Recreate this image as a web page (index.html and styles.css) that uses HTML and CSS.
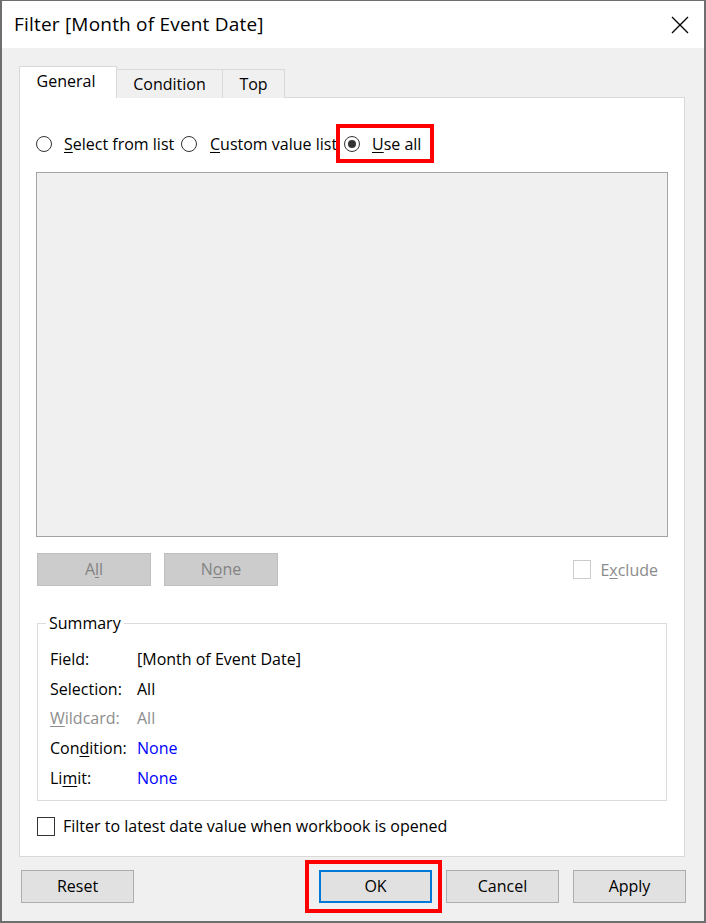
FILE: index.html
```html
<!DOCTYPE html>
<html>
<head>
<meta charset="utf-8">
<link rel="stylesheet" href="styles.css">
</head>
<body>
<div class="window">
  <div class="titlebar">
    <span class="title">Filter [Month of Event Date]</span>
    <svg class="close" width="18" height="18" viewBox="0 0 18 18"><path d="M1 1 L17 17 M17 1 L1 17" stroke="#000" stroke-width="1.3" fill="none"/></svg>
  </div>
  <div class="content">
    <div class="tabs">
      <div class="tab active">General</div>
      <div class="tab">Condition</div>
      <div class="tab">Top</div>
    </div>
    <div class="panel">
      <div class="radios">
        <label class="radio r1"><span class="circle"></span><span><u>S</u>elect from list</span></label>
        <label class="radio r2"><span class="circle"></span><span><u>C</u>ustom value list</span></label>
        <label class="radio r3 highlight"><span class="circle checked"></span><span><u>U</u>se all</span></label>
      </div>
      <div class="listbox"></div>
      <div class="listactions">
        <div class="btn disabled">A<u>l</u>l</div>
        <div class="btn disabled">N<u>o</u>ne</div>
        <div class="spacer"></div>
        <label class="check disabled"><span class="box"></span><span>E<u>x</u>clude</span></label>
      </div>
      <fieldset class="summary">
        <legend>Summary</legend>
        <div class="grid">
          <span>Field:</span><span>[Month of Event Date]</span>
          <span>Selection:</span><span>All</span>
          <span class="muted"><u>W</u>ildcard:</span><span class="muted">All</span>
          <span>Con<u>d</u>ition:</span><span class="link">None</span>
          <span>Li<u>m</u>it:</span><span class="link">None</span>
        </div>
      </fieldset>
      <label class="check latest"><span class="box dark"></span><span>Filter to latest date value when workbook is opened</span></label>
    </div>
    <div class="footer">
      <div class="btn">Reset</div>
      <div class="spacer"></div>
      <div class="btn default highlight">OK</div>
      <div class="btn">Cancel</div>
      <div class="btn">Apply</div>
    </div>
  </div>
</div>
</body>
</html>
```
FILE: styles.css
```css
*, *::before, *::after { box-sizing: border-box; }
html, body { margin: 0; padding: 0; background: #fff; }
body {
  font-family: "Open Sans", "Noto Sans", "Liberation Sans", sans-serif;
  font-size: 16px;
  color: #000;
}
u { text-decoration: underline; text-underline-offset: 2px; text-decoration-thickness: 1px; }
.window {
  width: 706px;
  height: 923px;
  border: 1px solid #6e6e6e;
  border-width: 1px 2px 2px 2px;
  display: flex;
  flex-direction: column;
  background: #f0f0f0;
}
.titlebar {
  height: 47px;
  background: #fff;
  display: flex;
  align-items: center;
  justify-content: space-between;
  padding: 0 15px 2px 12px;
  flex: none;
}
.title { font-size: 19px; letter-spacing: 0.2px; }
.close { display: block; margin-top: 2px; }
.content {
  flex: 1;
  display: flex;
  flex-direction: column;
  padding: 18px 19px 0 17px;
}
.tabs {
  display: flex;
  align-items: flex-end;
  height: 32px;
  position: relative;
  z-index: 1;
  margin-bottom: -1px;
}
.tab {
  height: 29px;
  border: 1px solid #d9d9d9;
  border-bottom: none;
  background: #f0f0f0;
  display: flex;
  align-items: center;
  justify-content: center;
  padding-bottom: 1px;
  margin-left: -1px;
}
.tab:nth-child(2) { width: 107px; }
.tab:nth-child(3) { width: 63px; }
.tab.active {
  height: 32px;
  width: 98px;
  background: #fff;
  margin-left: 0;
  padding-bottom: 3px;
  padding-right: 4px;
}
.panel {
  height: 760px;
  background: #fff;
  border: 1px solid #d9d9d9;
  padding: 0 16px;
  display: flex;
  flex-direction: column;
}
.radios {
  display: flex;
  align-items: center;
  height: 24px;
  margin-top: 34px;
}
.radio {
  display: flex;
  align-items: center;
  gap: 12px;
  position: relative;
  white-space: nowrap;
}
.r1 { width: 144px; }
.r2 { width: 162px; margin-left: 1px; gap: 13px; }
.r3 { margin-left: 1px; gap: 12px; }
.circle {
  width: 16px;
  height: 16px;
  border: 1px solid #333;
  border-radius: 50%;
  background: #fff;
  display: flex;
  align-items: center;
  justify-content: center;
  flex: none;
}
.circle.checked::before {
  content: "";
  width: 8px;
  height: 8px;
  border-radius: 50%;
  background: #333;
}
.radio.highlight::after {
  content: "";
  position: absolute;
  left: -8px;
  top: -9px;
  width: 98px;
  height: 39px;
  border: 4px solid #f00;
}
.listbox {
  height: 365px;
  margin-top: 16px;
  background: #f0f0f0;
  border: 1px solid #a3a3a3;
  flex: none;
}
.listactions {
  display: flex;
  align-items: center;
  margin-top: 16px;
  margin-left: 1px;
  height: 33px;
  gap: 13px;
}
.spacer { flex: 1; }
.btn {
  width: 113px;
  height: 33px;
  background: #e1e1e1;
  border: 1px solid #adadad;
  display: flex;
  align-items: center;
  justify-content: center;
  padding-bottom: 1px;
  position: relative;
}
.btn.disabled {
  background: #cccccc;
  border-color: #bfbfbf;
  color: #838383;
  width: 114px;
}
.check {
  display: flex;
  align-items: center;
  gap: 9px;
}
.check.disabled { color: #8b8b8b; margin-right: 10px; gap: 9px; }
.box {
  width: 18px;
  height: 19px;
  border: 1px solid #cccccc;
  background: #fff;
  flex: none;
}
.box.dark { border-color: #333; }
.summary {
  margin: 26px 1px 0 1px;
  padding: 4px 12px 10px 12px;
  border: 1px solid #dcdcdc;
  height: 189px;
  min-width: 0;
}
.summary legend {
  padding: 0 3px;
  margin-left: -4px;
}
.grid {
  display: grid;
  grid-template-columns: 87px 1fr;
  grid-auto-rows: 29.75px;
  align-items: center;
  margin-top: 6px;
}
.muted { color: #8d8d8d; }
.link { color: #0000ff; }
.latest { margin-top: 14px; margin-left: 1px; gap: 8px; }
.footer {
  display: flex;
  align-items: center;
  gap: 14px;
  margin-top: 13px;
  padding: 0 0 0 2px;
}
.footer .btn:last-child { margin-right: -1px; }
.btn.default {
  border: 2px solid #0078d7;
}
.btn.highlight::after {
  content: "";
  position: absolute;
  left: -16px;
  top: -12px;
  right: -12px;
  bottom: -12px;
  border: 4px solid #f00;
}
```
